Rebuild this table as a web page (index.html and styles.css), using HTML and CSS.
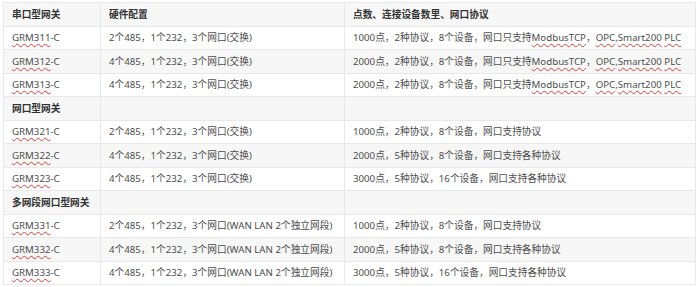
FILE: index.html
```html
<!DOCTYPE html>
<html lang="zh-CN">
<head>
    <meta charset="UTF-8">
    <title>网关型号</title>
    <link rel="stylesheet" href="styles.css">
</head>
<body>
    <table class="spec">
        <thead>
            <tr>
                <th class="c1">串口型网关</th>
                <th class="c2">硬件配置</th>
                <th class="c3">点数、连接设备数里、网口协议</th>
            </tr>
        </thead>
        <tbody>
            <tr><td><span class="sp">GRM311</span>-C</td><td>2个485，1个232，3个网口(交换)</td><td>1000点，2种协议，8个设备，网口只支持<span class="sp">ModbusTCP</span>，<span class="sp">OPC</span>,<span class="sp">Smart200</span> <span class="sp">PLC</span></td></tr>
            <tr><td><span class="sp">GRM312</span>-C</td><td>4个485，1个232，3个网口(交换)</td><td>2000点，2种协议，8个设备，网口只支持<span class="sp">ModbusTCP</span>，<span class="sp">OPC</span>,<span class="sp">Smart200</span> <span class="sp">PLC</span></td></tr>
            <tr><td><span class="sp">GRM313</span>-C</td><td>4个485，1个232，3个网口(交换)</td><td>2000点，2种协议，8个设备，网口只支持<span class="sp">ModbusTCP</span>，<span class="sp">OPC</span>,<span class="sp">Smart200</span> <span class="sp">PLC</span></td></tr>
            <tr class="group"><td>网口型网关</td><td></td><td></td></tr>
            <tr><td><span class="sp">GRM321</span>-C</td><td>2个485，1个232，3个网口(交换)</td><td>1000点，2种协议，8个设备，网口支持协议</td></tr>
            <tr><td><span class="sp">GRM322</span>-C</td><td>4个485，1个232，3个网口(交换)</td><td>2000点，5种协议，8个设备，网口支持各种协议</td></tr>
            <tr><td><span class="sp">GRM323</span>-C</td><td>4个485，1个232，3个网口(交换)</td><td>3000点，5种协议，16个设备，网口支持各种协议</td></tr>
            <tr class="group"><td>多网段网口型网关</td><td></td><td></td></tr>
            <tr><td><span class="sp">GRM331</span>-C</td><td>2个485，1个232，3个网口(WAN LAN 2个独立网段)</td><td>1000点，2种协议，8个设备，网口支持协议</td></tr>
            <tr><td><span class="sp">GRM332</span>-C</td><td>4个485，1个232，3个网口(WAN LAN 2个独立网段)</td><td>2000点，5种协议，8个设备，网口支持各种协议</td></tr>
            <tr><td><span class="sp">GRM333</span>-C</td><td>4个485，1个232，3个网口(WAN LAN 2个独立网段)</td><td>3000点，5种协议，16个设备，网口支持各种协议</td></tr>
        </tbody>
    </table>
</body>
</html>
```

FILE: styles.css
```css
body {
    margin: 0;
    background: #fff;
    font-family: "Noto Sans", "Noto Sans CJK SC", sans-serif;
    font-size: 9.7px;
    color: #4d4d4d;
}
.spec {
    margin: 2px 0 0 3px;
    width: 693px;
    border-collapse: collapse;
    table-layout: fixed;
}
.spec th, .spec td {
    border: 1px solid #e8e8e8;
    height: 22.5px;
    padding: 0 0 0 8px;
    text-align: left;
    white-space: nowrap;
    line-height: 13px;
}
.spec th {
    font-weight: bold;
    color: #333;
    background-color: #f7f7f7;
}
.spec .c1 {
    width: 88px;
}
.spec .c2 {
    width: 235px;
}
.spec tbody tr:nth-child(even) td {
    background-color: #f7f7f7;
}
.spec .group td {
    font-weight: bold;
    color: #333;
}
.sp {
    text-decoration: underline wavy #e53935;
    text-decoration-thickness: 1px;
    text-underline-offset: 2px;
}
```
